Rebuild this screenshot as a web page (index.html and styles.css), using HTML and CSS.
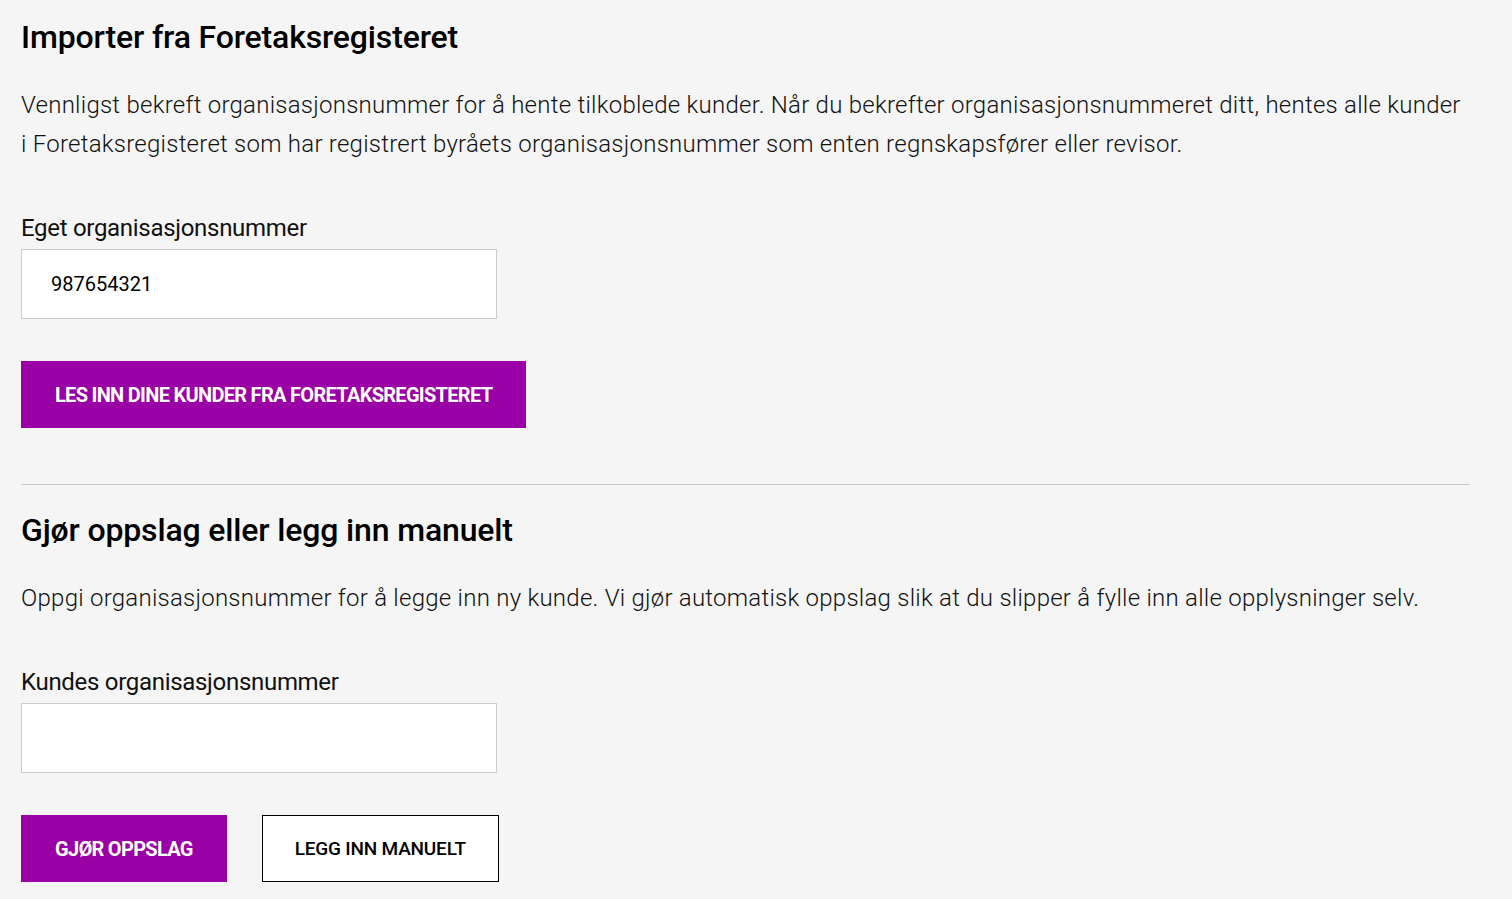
FILE: index.html
```html
<!DOCTYPE html>
<html lang="no">
<head>
    <meta charset="UTF-8">
    <meta name="viewport" content="width=device-width, initial-scale=1.0">
    <title>Importer kunder</title>
    <link rel="stylesheet" href="styles.css">
</head>
<body>

    <div class="container">
        <!-- Import fra Foretaksregisteret -->
        <section class="seksjon">
            <h1 class="tittel">Importer fra Foretaksregisteret</h1>
            <p class="ingress">Vennligst bekreft organisasjonsnummer for å hente tilkoblede kunder. Når du bekrefter organisasjonsnummeret ditt, hentes alle kunder i Foretaksregisteret som har registrert byråets organisasjonsnummer som enten regnskapsfører eller revisor.</p>

            <label class="felt-label" for="eget_orgnr">Eget organisasjonsnummer</label>
            <input class="felt" type="text" id="eget_orgnr" value="987654321">

            <div class="knapper">
                <button class="knapp knapp-primar">Les inn dine kunder fra Foretaksregisteret</button>
            </div>
        </section>

        <hr class="skille">

        <!-- Manuelt oppslag -->
        <section class="seksjon">
            <h2 class="tittel tittel-andre">Gjør oppslag eller legg inn manuelt</h2>
            <p class="ingress">Oppgi organisasjonsnummer for å legge inn ny kunde. Vi gjør automatisk oppslag slik at du slipper å fylle inn alle opplysninger selv.</p>

            <label class="felt-label" for="kunde_orgnr">Kundes organisasjonsnummer</label>
            <input class="felt" type="text" id="kunde_orgnr" value="">

            <div class="knapper">
                <button class="knapp knapp-primar">Gjør oppslag</button>
                <button class="knapp knapp-sekundar">Legg inn manuelt</button>
            </div>
        </section>
    </div>

</body>
</html>
```

FILE: styles.css
```css
/* Reset e base */
* {
    margin: 0;
    padding: 0;
    box-sizing: border-box;
}

body {
    font-family: Roboto, "Liberation Sans", sans-serif;
    background-color: #f5f5f5;
    color: #111;
}

.container {
    width: 1470px;
    padding-left: 21px;
}

.seksjon {
    display: flex;
    flex-direction: column;
    align-items: flex-start;
}

.tittel {
    font-size: 32px;
    font-weight: 500;
    line-height: 38px;
    letter-spacing: -0.15px;
    color: #000;
    margin-top: 18px;
}

.tittel-andre {
    margin-top: 26px;
}

.ingress {
    font-size: 24px;
    font-weight: 300;
    line-height: 39px;
    letter-spacing: 0.25px;
    margin-top: 30px;
    color: #111;
}

.felt-label {
    font-size: 24px;
    font-weight: 400;
    line-height: 30px;
    letter-spacing: -0.3px;
    margin-top: 49px;
    margin-bottom: 6px;
}

.felt {
    width: 476px;
    height: 70px;
    border: 1px solid #ccc;
    background-color: #fff;
    padding: 0 29px;
    font-family: Roboto, sans-serif;
    font-size: 20px;
    color: #000;
}

.knapper {
    display: flex;
    gap: 35px;
    margin-top: 42px;
}

.knapp {
    height: 67px;
    padding: 0 34px;
    font-family: Roboto, sans-serif;
    font-size: 20px;
    font-weight: 700;
    letter-spacing: -0.7px;
    text-transform: uppercase;
    cursor: pointer;
}

.knapp-primar {
    background-color: #9900a5;
    color: #fff;
    border: none;
}

.knapp-sekundar {
    background-color: #fff;
    color: #000;
    font-size: 19px;
    font-weight: 500;
    letter-spacing: -0.2px;
    padding: 0 32px;
    border: 1px solid #000;
}

.skille {
    border: none;
    border-top: 1px solid #c8c8c8;
    margin-top: 56px;
}
```
